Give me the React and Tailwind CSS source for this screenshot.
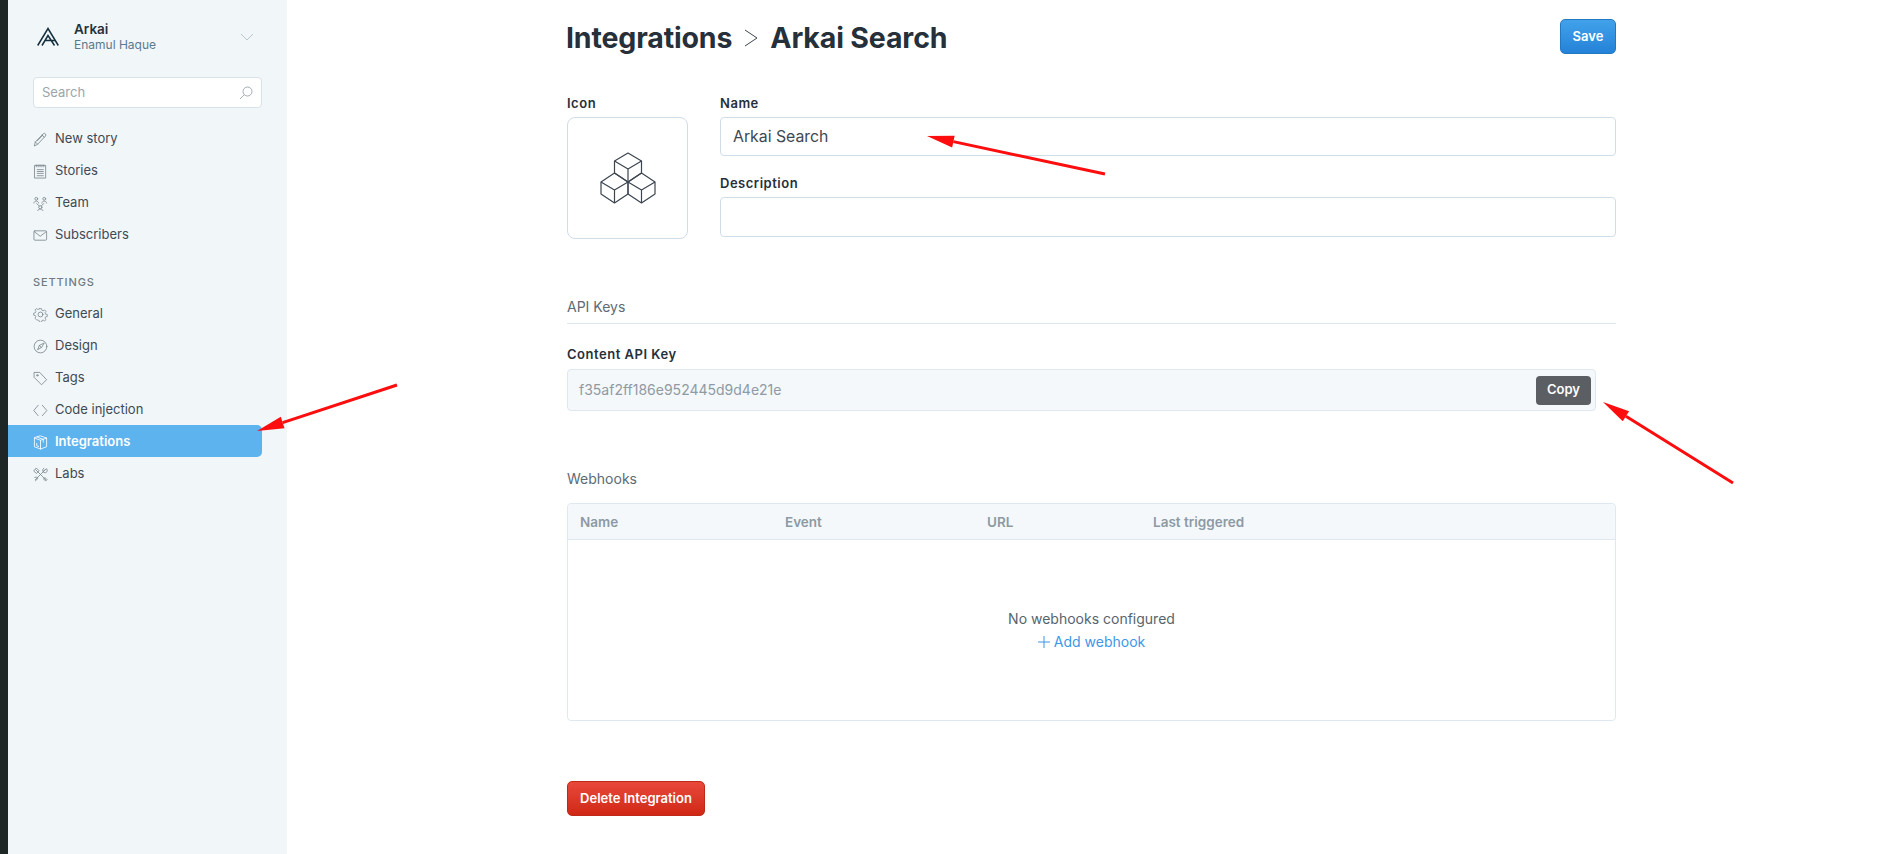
import React from 'react';

const Icon = ({ children }) => (
  <svg width="15" height="15" viewBox="0 0 16 16" fill="none" stroke="currentColor" strokeWidth="0.9" strokeLinecap="round" strokeLinejoin="round" className="shrink-0">
    {children}
  </svg>
);

const icons = {
  pen: <><path d="M1.5 14.5l1-4L10.8 2a1.6 1.6 0 0 1 2.4 0 1.7 1.7 0 0 1 0 2.4L5 13z" /><path d="M2.5 10.5L5 13M9.6 3.2l2.4 2.4M4.5 9.5l6-6" /></>,
  stories: <><rect x="2" y="1.5" width="11.5" height="13.5" /><path d="M3.5 1v2M5.5 1v2M7.5 1v2M9.5 1v2M11.5 1v2M4.5 6h6.5M4.5 8h6.5M4.5 10h6.5M4.5 12.5h6.5" /></>,
  team: <><circle cx="3.5" cy="3" r="1.5" /><circle cx="12" cy="3" r="1.5" /><circle cx="7.8" cy="12" r="1.7" /><path d="M1 7.5c.3-1.5 1.2-2 2.5-2s2.2.5 2.5 2M9.5 7.5c.3-1.5 1.2-2 2.5-2s2.2.5 2.5 2M4 8l2.5 2.5M11.5 8L9 10.5M5 15.5c.3-1 1.4-1.5 2.8-1.5s2.5.5 2.8 1.5" /></>,
  mail: <><rect x="1" y="3" width="13.5" height="10" rx="1" /><path d="M1.5 4l6.2 4.8L14 4" /></>,
  gear: <><circle cx="8" cy="8" r="2.6" /><path d="M6.8 1h2.4l.4 2 1.5.7 1.8-1.1 1.6 1.7-1.1 1.7.6 1.6 2 .4v2.4l-2 .4-.6 1.5 1.1 1.8-1.6 1.6-1.8-1.1-1.5.6-.4 2H6.8l-.4-2-1.5-.6L3 14.1l-1.6-1.6 1.1-1.8-.6-1.5-2-.4V6.4l2-.4.6-1.6L1.4 2.7 3 1 4.9 2.1l1.5-.7z" transform="translate(0.8 0.8) scale(0.9)" /></>,
  compass: <><circle cx="8" cy="8" r="6.8" /><path d="M11.5 4.5L6.8 6.8 4.9 11.4l3.9-2.2z" /><path d="M6.8 6.8l2 2.4" /></>,
  tag: <><path d="M1.5 1.5h5.7l7.3 7.8-5.4 5.4-7.6-7.6z" /><circle cx="4.6" cy="4.6" r="0.8" /></>,
  code: <path d="M5.5 2.5L.8 8l4.7 5.5M10 2.5L14.8 8 10 13.5" />,
  box: <><path d="M8 1l6.5 2.2v9.3L8 15l-6.5-2.5V3.2z" /><path d="M1.5 3.2L8 5.6l6.5-2.4M8 5.6V15M4.5 2.2l6.4 2.4v3" /><path d="M4 9v2.5l2 .8" /></>,
  tools: <><path d="M2.5 13.5L13 3M3 3l10.5 10.5" /><path d="M1 4l2.5-3 3 3-2.5 2.5zM11.5 1.2a3 3 0 0 0-1 3.6L14.5 1.8a3 3 0 0 1 .4 3.2 3 3 0 0 1-3.4 1M1.8 11a3 3 0 0 1 3.6 1L2.5 14.8M13 11.5l2 2-1.5 1.5-2-2z" /></>,
};

const mainNav = [
  { label: 'New story', icon: 'pen' },
  { label: 'Stories', icon: 'stories' },
  { label: 'Team', icon: 'team' },
  { label: 'Subscribers', icon: 'mail' },
];

const settingsNav = [
  { label: 'General', icon: 'gear' },
  { label: 'Design', icon: 'compass' },
  { label: 'Tags', icon: 'tag' },
  { label: 'Code injection', icon: 'code' },
  { label: 'Integrations', icon: 'box', active: true },
  { label: 'Labs', icon: 'tools' },
];

const NavItem = ({ label, icon, active }) => (
  <a className={`flex h-8 items-center gap-[7px] rounded-r-[5px] pl-[25px] pt-[2px] text-[13px] ${active ? 'bg-[#5cb3ee] font-semibold text-white' : 'text-[#3e4a54]'}`}>
    <span className={active ? 'text-white' : 'text-[#7d8890]'}>
      <Icon>{icons[icon]}</Icon>
    </span>
    {label}
  </a>
);

const Sidebar = () => (
  <aside className="flex h-full w-[279px] shrink-0 flex-col bg-[#f1f6f9] pr-[25px]">
    <div className="flex h-[77px] items-center pl-[29px] pb-[4px]">
      <svg width="22" height="19" viewBox="0 0 22 19" fill="none" stroke="#15303f" strokeWidth="1.5" className="shrink-0">
        <path d="M0.7 18.5L11 1.5l10.3 17" />
        <path d="M5 18.5L11 8.5l6.5 10M8 13.5h10" />
      </svg>
      <div className="ml-[15px] flex-1 leading-none">
        <div className="text-[13.5px] font-semibold leading-[16px] text-[#26303a]">Arkai</div>
        <div className="text-[12px] leading-[15px] text-[#5b7a8c]">Enamul Haque</div>
      </div>
      <svg width="14" height="8" viewBox="0 0 14 8" fill="none" stroke="#b3bfc8" strokeWidth="0.9" className="mr-[8px]">
        <path d="M1 1l6 6 6-6" />
      </svg>
    </div>
    <div className="ml-[25px] flex h-[31px] items-center justify-between rounded-[4px] border border-[#d9e2e8] bg-white pl-[8px] pr-[8px] text-[13px] text-[#9aa5ad]">
      Search
      <svg width="14" height="14" viewBox="0 0 14 14" fill="none" stroke="#8d989f" strokeWidth="0.8">
        <circle cx="8.5" cy="5.5" r="4.5" />
        <path d="M5.3 8.7L1 13" />
      </svg>
    </div>
    <nav className="mt-[14px]">
      {mainNav.map((item) => (
        <NavItem key={item.label} {...item} />
      ))}
    </nav>
    <div className="mt-[25px] mb-[8px] pl-[25px] text-[11px] font-medium leading-[14px] tracking-[0.08em] text-[#6f7a82]">SETTINGS</div>
    <nav>
      {settingsNav.map((item) => (
        <NavItem key={item.label} {...item} />
      ))}
    </nav>
  </aside>
);

const Label = ({ children, className = '' }) => (
  <div className={`text-[13px] font-semibold leading-[16px] tracking-[0.04em] text-[#26303a] ${className}`}>{children}</div>
);

const CubesIcon = () => (
  <svg width="56" height="52" viewBox="0 0 56 52" fill="none" stroke="#3c4550" strokeWidth="1.2" strokeLinejoin="round">
    <path d="M28 1l13.5 8v12L28 30l-13.5-9V9z" />
    <path d="M14.5 9L28 17l13.5-8M28 17v13" />
    <path d="M14.5 21L28 30v12l-13.5 9L1 42V30z" />
    <path d="M1 30l13.5 8L28 30M14.5 38v13" />
    <path d="M41.5 21L55 30v12l-13.5 9L28 42V30z" />
    <path d="M28 30l13.5 8L55 30M41.5 38v13" />
  </svg>
);

const Arrow = ({ x1, y1, x2, y2 }) => {
  // tail (x1,y1) to tip (x2,y2), head drawn as a narrow triangle
  const len = Math.hypot(x2 - x1, y2 - y1);
  const ux = (x2 - x1) / len;
  const uy = (y2 - y1) / len;
  const bx = x2 - ux * 27;
  const by = y2 - uy * 27;
  const head = `${x2},${y2} ${bx - uy * 6},${by + ux * 6} ${bx + uy * 6},${by - ux * 6}`;
  return (
    <g>
      <line x1={x1} y1={y1} x2={bx} y2={by} stroke="#fd0d0d" strokeWidth="3" />
      <polygon points={head} fill="#fd0d0d" />
    </g>
  );
};

const App = () => {
  return (
    <div className="relative flex h-screen overflow-hidden bg-white font-['Inter',sans-serif]">
      <div className="w-2 shrink-0 bg-[#1e2626]" />
      <Sidebar />

      <main className="ml-[280px] w-[1049px]">
        <header className="flex h-[77px] items-start justify-between">
          <h1 className="-ml-px flex items-center pt-[19px] text-[28.5px] font-bold leading-[38px] tracking-[-0.005em] text-[#26303a]">
            Integrations
            <svg width="16" height="20" viewBox="0 0 16 20" fill="none" stroke="#3c4550" strokeWidth="1" className="mx-[11px]">
              <path d="M2 2l12 8-12 8" />
            </svg>
            Arkai Search
          </h1>
          <button className="mt-[19px] h-[35px] w-[56px] rounded-[5px] border border-[#2478c0] bg-gradient-to-b from-[#41a2ea] to-[#2482d8] text-[13px] font-semibold text-white">
            Save
          </button>
        </header>

        <section className="mt-[18px] flex gap-[32px]">
          <div className="w-[121px] shrink-0">
            <Label className="mb-[6px]">Icon</Label>
            <div className="flex h-[122px] items-center justify-center rounded-[8px] border border-[#cfdde9]">
              <CubesIcon />
            </div>
          </div>
          <div className="flex-1">
            <Label className="mb-[6px]">Name</Label>
            <div className="flex h-[39px] items-center rounded-[4px] border border-[#cfdde9] px-[12px] text-[15.8px] text-[#3c4853]">
              Arkai Search
            </div>
            <Label className="mt-[19px] mb-[6px]">Description</Label>
            <div className="h-[40px] rounded-[4px] border border-[#cfdde9]" />
          </div>
        </section>

        <h2 className="mt-[59px] border-b border-[#dde7ef] pb-[7px] text-[14px] leading-[18px] text-[#5c6b76]">API Keys</h2>

        <Label className="mt-[22px] mb-[7px]">Content API Key</Label>
        <div className="mr-[20px] flex h-[42px] items-center justify-between rounded-[4px] border border-[#dfe8f0] bg-[#f4f8fb] pl-[11px] pr-[4px]">
          <span className="relative -top-px text-[14px] text-[#8f9aa3]">f35af2ff186e952445d9d4e21e</span>
          <button className="h-[29px] w-[55px] rounded-[4px] bg-[#5b5e63] text-[13px] font-semibold text-white">Copy</button>
        </div>

        <h2 className="mt-[59px] mb-[15px] text-[14px] leading-[18px] text-[#5c6b76]">Webhooks</h2>
        <div className="h-[218px] rounded-[4px] border border-[#dfe8f0]">
          <div className="flex h-[36px] items-center rounded-t-[4px] border-b border-[#dfe8f0] bg-[#f4f8fb] pt-px text-[13.5px] font-semibold text-[#8d9aa3]">
            <span className="w-[217px] pl-[12px]">Name</span>
            <span className="w-[202px]">Event</span>
            <span className="w-[166px]">URL</span>
            <span>Last triggered</span>
          </div>
          <div className="pt-[69px] text-center">
            <p className="text-[14px] leading-[20px] text-[#56646f]">No webhooks configured</p>
            <a className="mt-[3px] flex items-center justify-center gap-[4px] text-[14px] leading-[20px] text-[#3d97e8]">
              <svg width="12" height="12" viewBox="0 0 12 12" fill="none" stroke="#3d97e8" strokeWidth="1">
                <path d="M6 0v12M0 6h12" />
              </svg>
              Add webhook
            </a>
          </div>
        </div>

        <button className="mt-[60px] h-[35px] w-[138px] rounded-[5px] border border-[#bf2a18] bg-gradient-to-b from-[#e8483a] to-[#d02714] text-[13px] font-semibold text-white">
          Delete Integration
        </button>
      </main>

      <svg className="pointer-events-none absolute inset-0 h-full w-full">
        <Arrow x1={1105} y1={174} x2={927} y2={136} />
        <Arrow x1={397} y1={385} x2={257} y2={431} />
        <Arrow x1={1733} y1={483} x2={1603} y2={402} />
      </svg>
    </div>
  );
};

export default App;
